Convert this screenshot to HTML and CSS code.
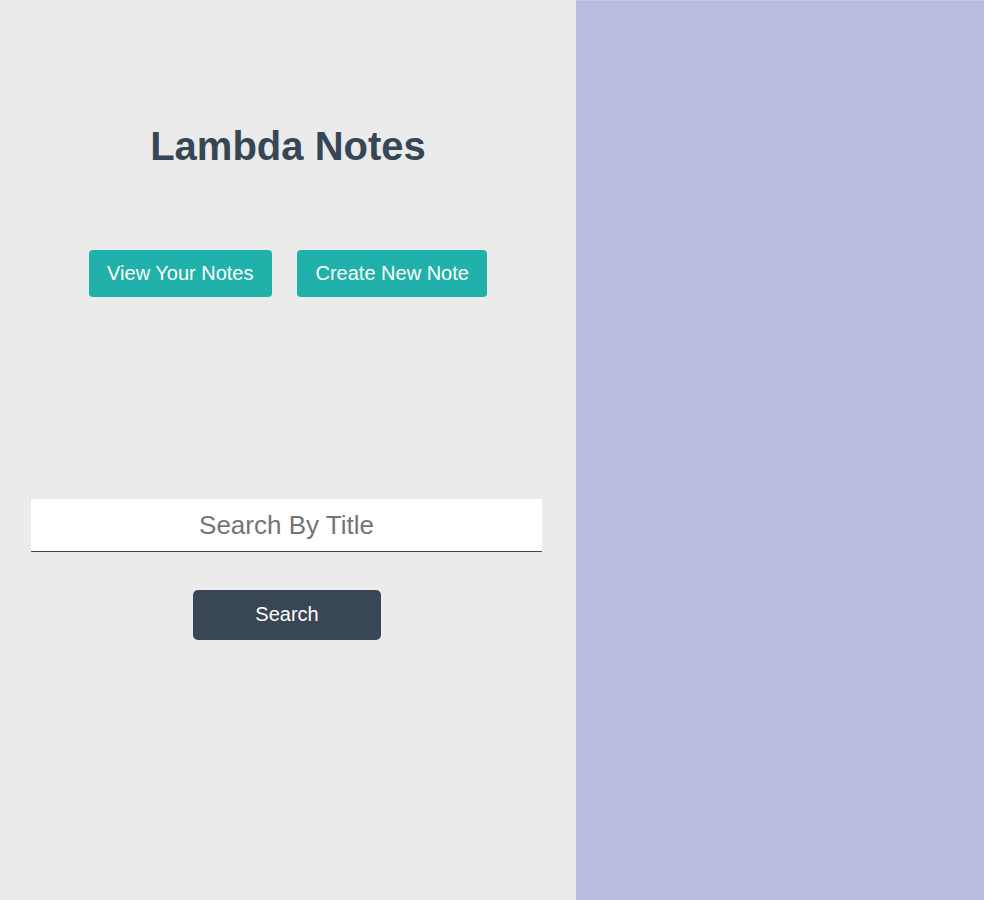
FILE: index.html
```html
<!DOCTYPE html>
<html>
<head>
<meta charset="utf-8">
<link rel="stylesheet" href="styles.css">
</head>
<body>
<div class="app">
  <div class="sidebar">
    <h1 class="title">Lambda Notes</h1>
    <div class="nav">
      <button class="nav-btn">View Your Notes</button>
      <button class="nav-btn">Create New Note</button>
    </div>
    <input class="search-input" type="text" placeholder="Search By Title">
    <button class="search-btn">Search</button>
  </div>
  <div class="content"></div>
</div>
</body>
</html>
```

FILE: styles.css
```css
html, body {
  margin: 0;
  padding: 0;
}
body {
  font-family: "Liberation Sans", Arial, sans-serif;
}
.app {
  display: flex;
  width: 984px;
  height: 900px;
}
.sidebar {
  width: 576px;
  flex: none;
  background: #ebebeb;
  display: flex;
  flex-direction: column;
  align-items: center;
}
.content {
  flex: 1;
  background: #babbe1;
  border-top: 1px solid #c9cae6;
}
.title {
  margin: 123px 0 0 0;
  font-size: 40px;
  line-height: 46px;
  font-weight: bold;
  color: #374656;
}
.nav {
  display: flex;
  gap: 25px;
  margin-top: 81px;
}
.nav-btn {
  font-family: "Liberation Sans", Arial, sans-serif;
  font-size: 20px;
  line-height: 23px;
  color: #ffffff;
  background: #20b2aa;
  border: none;
  border-radius: 4px;
  padding: 12px 18.5px;
  height: 47px;
}
.search-input {
  align-self: flex-start;
  margin: 202px 0 0 31px;
  width: 511px;
  height: 53px;
  box-sizing: border-box;
  border: none;
  border-bottom: 1px solid #3a4655;
  background: #ffffff;
  font-family: "Liberation Sans", Arial, sans-serif;
  font-size: 26px;
  text-align: center;
  padding: 0;
  outline: none;
}
.search-input::placeholder {
  color: #757575;
}
.search-btn {
  margin: 38px 2px 0 0;
  width: 188px;
  height: 50px;
  padding: 0 0 1px 0;
  background: #384655;
  color: #ffffff;
  border: none;
  border-radius: 5px;
  font-family: "Liberation Sans", Arial, sans-serif;
  font-size: 20px;
}
```
